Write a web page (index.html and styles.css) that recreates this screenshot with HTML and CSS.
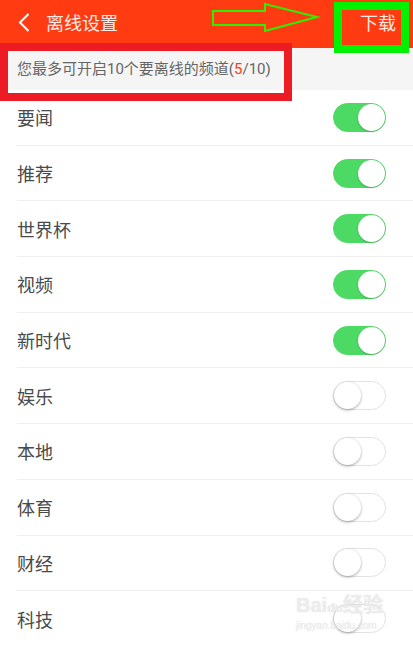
FILE: index.html
```html
<!DOCTYPE html>
<html>
<head>
<meta charset="utf-8" />
<link rel="stylesheet" href="styles.css">
</head>
<body>
<div class="page">
  <div class="header">
    <span class="back">
      <svg width="12" height="19" viewBox="0 0 12 19"><polyline points="10.5,1 2,9.5 10.5,18" fill="none" stroke="#fff" stroke-width="2"/></svg>
    </span>
    <span class="title">离线设置</span>
    <span class="download">下载</span>
  </div>
  <div class="notice">您最多可开启10个要离线的频道(<span class="count">5</span>/10)</div>

  <ul class="list">
    <li><span>要闻</span><i class="switch on"></i></li>
    <li><span>推荐</span><i class="switch on"></i></li>
    <li><span>世界杯</span><i class="switch on"></i></li>
    <li><span>视频</span><i class="switch on"></i></li>
    <li><span>新时代</span><i class="switch on"></i></li>
    <li><span>娱乐</span><i class="switch"></i></li>
    <li><span>本地</span><i class="switch"></i></li>
    <li><span>体育</span><i class="switch"></i></li>
    <li><span>财经</span><i class="switch"></i></li>
    <li><span>科技</span><i class="switch"></i></li>
  </ul>

  <!-- annotations drawn on top of the screenshot -->
  <div class="mark-red"></div>
  <div class="mark-green"></div>
  <svg class="arrow" width="110" height="32" viewBox="0 0 110 32">
    <polygon points="1,11 53,11 53,4 105,17 53,31 53,25 1,25" fill="none" stroke="#2cf000" stroke-width="2"/>
  </svg>
  <div class="watermark">
    <div class="wm-logo">Bai<span class="wm-du">du</span>经验</div>
    <div class="wm-url">jingyan.baidu.com</div>
  </div>
</div>
</body>
</html>
```

FILE: styles.css
```css
body {
  margin: 0;
  font-family: "Noto Sans CJK SC", "Noto Sans", sans-serif;
  background: #fff;
}
.page {
  position: relative;
  width: 413px;
  height: 645px;
  overflow: hidden;
}
.header {
  height: 48px;
  background: #ff3b12;
  display: flex;
  align-items: center;
  color: #fff;
  font-size: 18px;
}
.back {
  display: flex;
  margin-left: 18px;
  margin-top: -4px;
}
.title {
  margin-left: 16px;
  margin-top: -5px;
  color: #fdeae4;
}
.download {
  margin-left: auto;
  margin-right: 17px;
  margin-top: -5px;
  color: #fdeae4;
}
.notice {
  height: 42px;
  line-height: 42px;
  background: #f5f5f5;
  padding-left: 17px;
  font-family: Roboto, "Noto Sans CJK SC", sans-serif;
  font-size: 15px;
  color: #666;
}
.count {
  color: #ff3b12;
}
.list {
  list-style: none;
  margin: 0;
  padding: 0;
}
.list li {
  height: 54.7px;
  margin-left: 17px;
  padding-right: 27px;
  border-bottom: 1px solid #efefef;
  display: flex;
  align-items: center;
  justify-content: space-between;
  font-size: 18px;
  color: #4a4a4a;
}
.switch {
  position: relative;
  box-sizing: border-box;
  width: 53px;
  height: 29px;
  border-radius: 15px;
  border: 1px solid #e2e2e2;
  background: #fff;
}
.switch::after {
  content: "";
  position: absolute;
  top: 0;
  left: 0;
  width: 27px;
  height: 27px;
  border-radius: 50%;
  background: #fff;
  box-shadow: 0 1px 3px rgba(0,0,0,.35);
}
.switch.on {
  background: #4cd964;
  border-color: #4cd964;
}
.switch.on::after {
  left: auto;
  right: 0;
  box-shadow: 0 1px 2px rgba(0,0,0,.2);
}
.mark-red {
  position: absolute;
  left: 0;
  top: 43px;
  width: 276px;
  height: 42px;
  border: 8px solid #ec1b24;
}
.mark-green {
  position: absolute;
  left: 334px;
  top: 2px;
  width: 59px;
  height: 35px;
  border: 8px solid #00f200;
}
.arrow {
  position: absolute;
  left: 212px;
  top: 0;
}
.watermark {
  position: absolute;
  left: 296px;
  top: 594px;
  color: rgba(240,240,240,.8);
  text-shadow: 0 0 1px rgba(190,190,190,.5);
  font-family: "Liberation Sans", "Noto Sans CJK SC", sans-serif;
}
.wm-logo {
  font-size: 20px;
  font-weight: bold;
  line-height: 22px;
}
.wm-du {
  font-size: 13px;
}
.wm-url {
  font-size: 10px;
  line-height: 14px;
}
```
